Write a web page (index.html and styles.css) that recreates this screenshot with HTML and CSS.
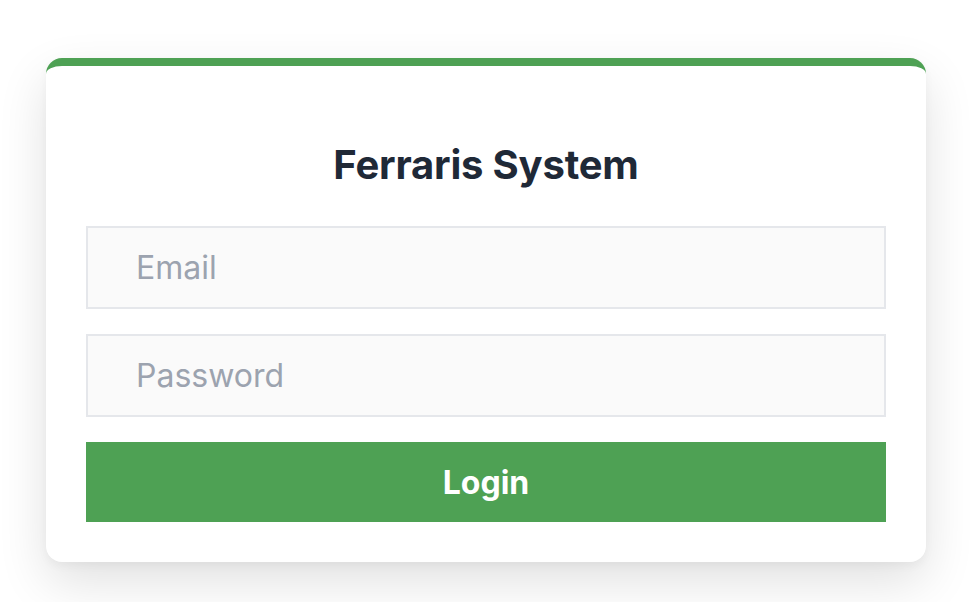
FILE: index.html
```html
<!DOCTYPE html>
<html>
<head>
<meta charset="utf-8">
<link rel="stylesheet" href="styles.css">
</head>
<body>
<div class="card">
  <h1 class="title">Ferraris System</h1>
  <form class="form">
    <input class="field" type="email" placeholder="Email">
    <input class="field" type="password" placeholder="Password">
    <button class="btn" type="button">Login</button>
  </form>
</div>
</body>
</html>
```
FILE: styles.css
```css
* { box-sizing: border-box; }
html, body { margin: 0; background: #ffffff; }
body {
  font-family: Inter, "Noto Sans", sans-serif;
  padding: 58px 0 40px 46px;
}
.card {
  width: 880px;
  background: #fff;
  border-top: 8px solid #4ea154;
  border-radius: 16px;
  box-shadow: 0 20px 50px rgba(0,0,0,0.12), 0 4px 10px rgba(0,0,0,0.04);
  padding: 0 40px 40px;
}
.title {
  margin: 0;
  padding-top: 79px;
  height: 160px;
  line-height: 40px;
  text-align: center;
  font-size: 40px;
  font-weight: 700;
  letter-spacing: -0.2px;
  color: #1f2937;
}
.form {
  display: flex;
  flex-direction: column;
  gap: 25px;
}
.field {
  height: 83px;
  border: 2px solid #e5e7eb;
  background: #fafafa;
  padding: 0 48px;
  font-family: inherit;
  font-size: 32px;
  color: #1f2937;
  outline: none;
  border-radius: 0;
}
.field::placeholder { color: #9ca3af; }
.btn {
  height: 80px;
  background: #4ea154;
  border: none;
  color: #fff;
  font-family: inherit;
  font-size: 32px;
  font-weight: 700;
  border-radius: 0;
}
```
